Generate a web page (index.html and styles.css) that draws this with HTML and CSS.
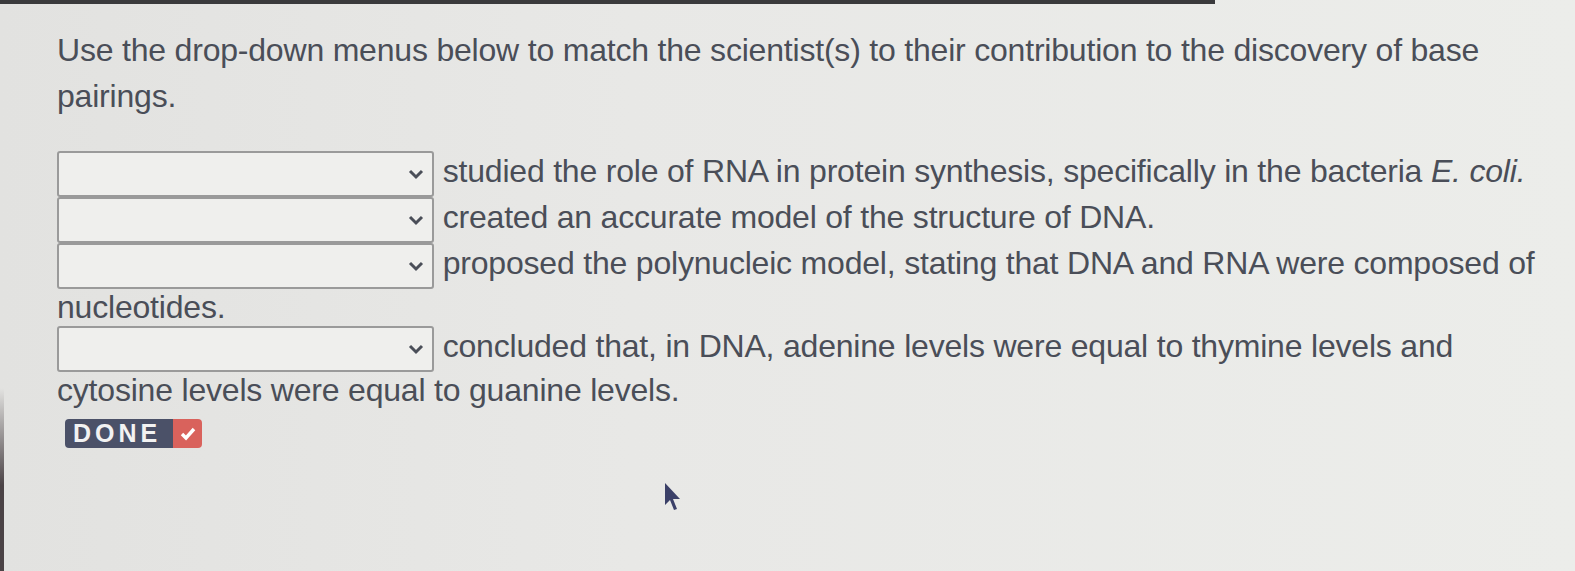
FILE: index.html
```html
<!DOCTYPE html>
<html lang="en">
<head>
  <meta charset="UTF-8">
  <meta name="viewport" content="width=device-width, initial-scale=1.0">
  <title>Base Pairing Discovery</title>
  <link rel="stylesheet" href="styles.css">
</head>
<body>

  <div class="topbar"></div>

  <div class="question">
    <p class="prompt">Use the drop-down menus below to match the scientist(s) to their contribution to the discovery of base pairings.</p>

    <div class="matches">
      <span class="dropdown"><svg width="16" height="11" viewBox="0 0 16 11"><path d="M2 2 L8 8 L14 2" fill="none" stroke="#4a4e58" stroke-width="3"/></svg></span>
      studied the role of RNA in protein synthesis, specifically in the bacteria <i>E. coli.</i><br>
      <span class="dropdown"><svg width="16" height="11" viewBox="0 0 16 11"><path d="M2 2 L8 8 L14 2" fill="none" stroke="#4a4e58" stroke-width="3"/></svg></span>
      created an accurate model of the structure of DNA.<br>
      <span class="dropdown"><svg width="16" height="11" viewBox="0 0 16 11"><path d="M2 2 L8 8 L14 2" fill="none" stroke="#4a4e58" stroke-width="3"/></svg></span>
      proposed the polynucleic model, stating that DNA and RNA were composed of nucleotides.<br>
      <span class="dropdown"><svg width="16" height="11" viewBox="0 0 16 11"><path d="M2 2 L8 8 L14 2" fill="none" stroke="#4a4e58" stroke-width="3"/></svg></span>
      concluded that, in DNA, adenine levels were equal to thymine levels and cytosine levels were equal to guanine levels.
    </div>

    <button class="done">
      <span class="done-label">DONE</span>
      <span class="done-check"><svg width="18" height="16" viewBox="0 0 18 16"><path d="M3 8 L7 12 L15 3" fill="none" stroke="#fff" stroke-width="3.4"/></svg></span>
    </button>
  </div>

  <!-- mouse pointer -->
  <svg class="pointer" width="18" height="30" viewBox="0 0 18 30">
    <path d="M1 1 L1 23 L6 18 L10 28 L13 27 L9 17 L16 17 Z" fill="#3b4068"/>
  </svg>

</body>
</html>
```

FILE: styles.css
```css
/* Generell stil */
body {
  margin: 0;
  height: 571px;
  overflow: hidden;
  font-family: "Liberation Sans", Arial, sans-serif;
  color: #4a4e58;
  background:
    linear-gradient(180deg, transparent 0%, transparent 68%, #4b4346 85%) left top / 4px 100% no-repeat,
    linear-gradient(90deg, #e2e2e0 0%, #e8e8e6 40%, #ecedea 100%);
  position: relative;
}
.topbar {
  width: 1215px;
  height: 4px;
  background-color: #3a3a3c;
}
.question {
  padding: 23px 30px 0 57px;
}
.prompt {
  margin: 0 0 32px 0;
  font-size: 32px;
  line-height: 46px;
  letter-spacing: -0.2px;
}
.matches {
  font-size: 32px;
  line-height: 37px;
  letter-spacing: -0.2px;
}
.dropdown {
  display: inline-flex;
  align-items: center;
  justify-content: flex-end;
  box-sizing: border-box;
  width: 377px;
  height: 46px;
  padding-right: 8px;
  vertical-align: middle;
  background-color: #efefed;
  border: 2px solid #9a9a9a;
  border-radius: 3px;
}
.done {
  display: inline-flex;
  align-items: stretch;
  margin-top: 10px;
  margin-left: 8px;
  padding: 0;
  border: none;
  border-radius: 4px;
  overflow: hidden;
  height: 29px;
  cursor: pointer;
}
.done-label {
  display: flex;
  align-items: center;
  padding: 0 12px 0 8px;
  background-color: #4b5168;
  color: #f2f2f2;
  font-family: "Liberation Sans", Arial, sans-serif;
  font-weight: bold;
  font-size: 25px;
  letter-spacing: 4px;
}
.done-check {
  display: flex;
  align-items: center;
  justify-content: center;
  width: 29px;
  background-color: #d9625c;
}
.pointer {
  position: absolute;
  left: 664px;
  top: 482px;
}
```
